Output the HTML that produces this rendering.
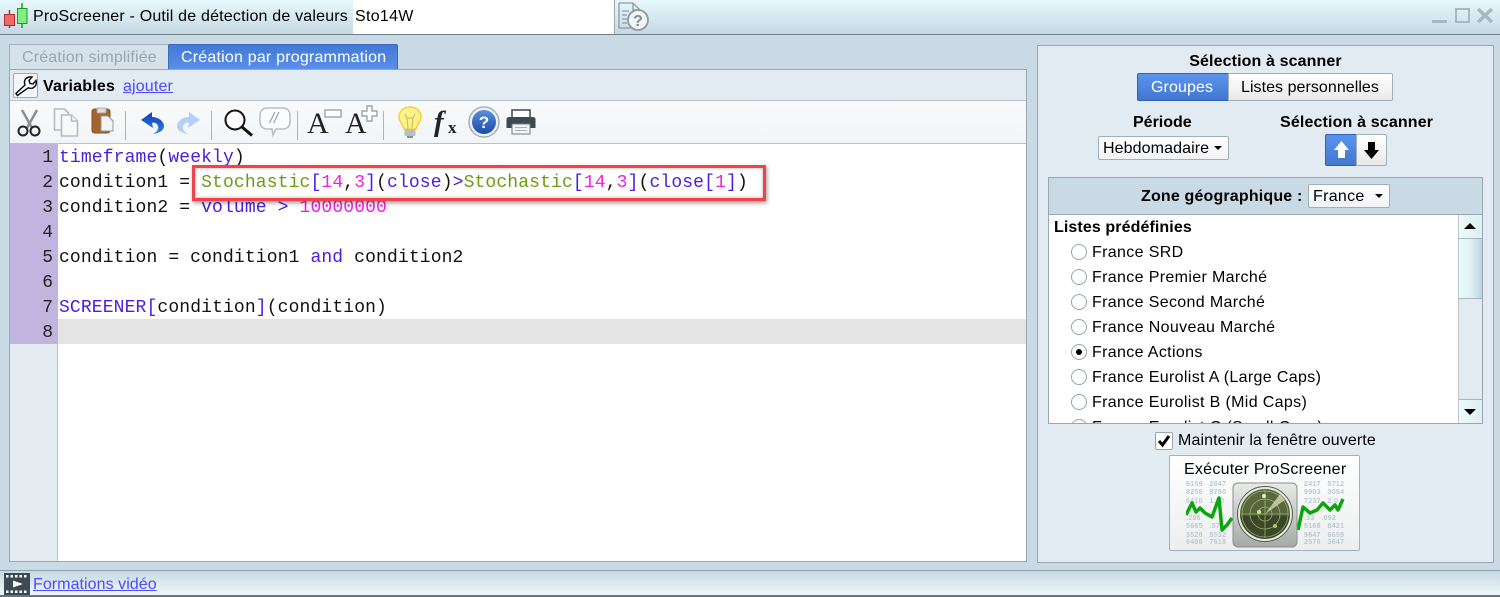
<!DOCTYPE html>
<html lang="fr"><head><meta charset="utf-8"><title>ProScreener</title>
<style>
*{box-sizing:border-box}
html,body{margin:0;padding:0}
body{width:1500px;height:597px;position:relative;overflow:hidden;background:#c9dae4;font-family:"Liberation Sans",Arial,sans-serif;font-size:16px;color:#000}
.a{position:absolute}
.t{position:absolute;white-space:nowrap;line-height:20px}
.b{font-weight:bold}
.code{position:absolute;left:59px;white-space:pre;font-family:"Liberation Mono","Courier New",monospace;font-size:18px;letter-spacing:.13px;line-height:25px;height:25px;color:#111}
.num{position:absolute;left:10px;width:43px;text-align:right;font-family:"Liberation Mono",monospace;font-size:18px;line-height:25px;color:#222}
.k{color:#4a1fe0}.n{color:#f020e0}.g{color:#6f9a10}.p{color:#4a1fe0}
.btn{position:absolute;background:linear-gradient(#fff,#e9e9e9);border:1px solid #9fb0ba;border-radius:2px}
.blue{background:linear-gradient(#5b93ee,#4277cf);border:1px solid #2f62b8;color:#fff}
.sep{position:absolute;top:111px;width:1px;height:29px;background:#a8b6bd}
.r{position:absolute;width:16px;height:16px;border:1px solid #9aa3a8;border-radius:50%;background:#fff}
.rl{position:absolute;white-space:nowrap;line-height:20px;letter-spacing:.35px}
a{color:#4a4aff;text-decoration:underline}
.caret{position:absolute;width:0;height:0;border-left:4px solid transparent;border-right:4px solid transparent;border-top:4px solid #000}
.d{position:absolute;font-size:7px;line-height:8px;color:#bcc9d1;font-weight:bold;letter-spacing:.3px;white-space:nowrap}
</style></head><body>

<!-- title bar -->
<div class="a" style="left:0;top:0;width:1500px;height:35px;background:linear-gradient(#e7f9fe,#c6d8e2);border-bottom:1px solid #6e7f88"></div>
<svg class="a" style="left:3px;top:2px" width="28" height="28">
<path d="M6.500 8v4M6.500 23v3" stroke="#b02b2b" stroke-width="1.500"/><rect x="1.500" y="12.500" width="10" height="11" fill="#f0686c" stroke="#b52c30"/>
<path d="M19 1v6M19 21v5" stroke="#1d9a1d" stroke-width="1.500"/><rect x="14.500" y="6.500" width="9.500" height="15" fill="#7ff07f" stroke="#1d9a1d"/></svg>
<div class="t" style="left:33px;top:7px;letter-spacing:.19px">ProScreener - Outil de détection de valeurs</div>
<div class="a" style="left:353px;top:0;width:262px;height:34px;background:#fff;border-right:1px solid #9aa8b0"></div>
<div class="t" style="left:355px;top:7px;letter-spacing:.3px">Sto14W</div>
<svg class="a" style="left:616px;top:0" width="36" height="33" fill="none" stroke="#8c9aa3" stroke-width="1.300">
<path d="M3 3h14l7 7v4M3 3v25h13M17 3v7h7"/><path d="M6 11h7M6 15h5M6 19h5M6 23h5" stroke-width="1.200"/>
<circle cx="22" cy="20" r="10" fill="#f3f5f6" stroke-width="1.800"/><text x="22" y="26" text-anchor="middle" font-family="Liberation Sans" font-weight="bold" font-size="16" fill="#7f8c94" stroke="none">?</text></svg>
<svg class="a" style="left:1428px;top:5px" width="68" height="22" fill="none" stroke="#a9b8c0" stroke-width="3">
<path d="M4 16.500h15"/><rect x="28" y="4" width="13" height="13" stroke-width="2"/><path d="M50 4l14 13M64 4L50 17" stroke-width="3.500"/></svg>

<!-- tabs -->
<div class="a" style="left:9px;top:44px;width:160px;height:26px;background:#d5e2ea;border:1px solid #9fb0ba;border-bottom:0;border-right:0"></div>
<div class="t" style="left:22px;top:48px;color:#9aa5ac;letter-spacing:.17px">Création simplifiée</div>
<div class="a" style="left:168px;top:44px;width:230px;height:26px;background:linear-gradient(#4279d6,#5a90ec);border:1px solid #3a6cc0;border-bottom:0;border-radius:2px 2px 0 0"></div>
<div class="t" style="left:181px;top:48px;color:#fff;letter-spacing:.2px">Création par programmation</div>

<!-- main panel -->
<div class="a" style="left:9px;top:69px;width:1018px;height:493px;background:#fff;border:1px solid #97a8b2"></div>
<div class="a" style="left:10px;top:70px;width:1016px;height:31px;background:#e3ebf2;border-bottom:1px solid #b6c3cb"></div>
<div class="a" style="left:10px;top:101px;width:1016px;height:43px;background:linear-gradient(#f8fafb,#f2f5f7);border-bottom:1px solid #b6c3cb"></div>
<div class="a" style="left:13px;top:73px;width:25px;height:25px;background:#f4f6f7;border:1px solid #9fa9af;border-radius:2px"></div>
<svg class="a" style="left:14px;top:74px" width="23" height="23" fill="#fff" stroke="#111" stroke-width="1.500"><path d="M3.500 21.500 2 19.500l9-8.500c-1-3-.5-5 1-6.500 1.500-1.300 3.500-2 6-1.500l-3 3.500 1 3 3 .5 3-3.500c.7 2.700 0 5-1.500 6.300-1.500 1.400-4 2-6.300 1z"/></svg>
<div class="t b" style="left:43px;top:77px;letter-spacing:.2px">Variables</div>
<a class="t" style="left:123px;top:77px;letter-spacing:.15px">ajouter</a>

<!-- toolbar icons -->
<svg class="a" style="left:16px;top:108px" width="26" height="30" fill="none">
<path d="M6 2l10 18M21 2L11 20" stroke="#8e8e8e" stroke-width="2.500"/>
<circle cx="7" cy="23" r="4.500" stroke="#222" stroke-width="2"/><circle cx="19" cy="23" r="4.500" stroke="#222" stroke-width="2"/></svg>
<svg class="a" style="left:52px;top:107px" width="28" height="30" fill="#f7f9f9" stroke="#b0bcc2" stroke-width="1.600">
<path d="M2.500 2h10l4 4v17h-14z"/><path d="M9.500 8h10l6 6v15h-16z"/><path d="M19.500 8v6h6"/></svg>
<svg class="a" style="left:91px;top:107px" width="24" height="28">
<rect x="1" y="2" width="18" height="24" rx="2.500" fill="#a5652a" stroke="#8a5020"/>
<rect x="6" y="1" width="9" height="5" rx="1" fill="#ddd" stroke="#aaa"/>
<path d="M10 9h7l5 5v10H10z" fill="#f4f4f4" stroke="#8f9aa0"/></svg>
<div class="sep" style="left:125px"></div>
<svg class="a" style="left:139px;top:110px" width="27" height="25">
<defs><linearGradient id="un" x1="0" y1="0" x2="0" y2="1"><stop offset="0" stop-color="#0f3fb0"/><stop offset="1" stop-color="#2f80ea"/></linearGradient></defs>
<path d="M2 10L13 2v5C20 7 25 12 25 16C25 20 21 23 14 24C18 22 20 19 19 16C18 13 15 12 13 13L14 18z" fill="url(#un)"/></svg>
<svg class="a" style="left:176px;top:110px" width="27" height="25">
<path d="M24 10L13 2v5C6 7 1 12 1 16C1 20 5 23 12 24C8 22 6 19 7 16C8 13 11 12 13 13L12 18z" fill="#b6cffa"/></svg>
<div class="sep" style="left:211px"></div>
<svg class="a" style="left:222px;top:107px" width="32" height="30" fill="none">
<circle cx="13" cy="13" r="9.500" stroke="#111" stroke-width="2" fill="#fff"/><path d="M20 20l10 8.500" stroke="#111" stroke-width="3"/></svg>
<svg class="a" style="left:258px;top:106px" width="34" height="34" fill="#fbfcfc" stroke="#b5bdc1" stroke-width="1.500">
<path d="M9 2h16c4 0 7 3 7 7v7c0 4-3 7-7 7h-7l-3 6-1-6h-5c-4 0-7-3-7-7V9c0-4 3-7 7-7z"/>
<text x="16" y="17" text-anchor="middle" font-family="Liberation Sans" font-style="italic" font-size="15" fill="#8f9a9f" stroke="none">//</text></svg>
<div class="sep" style="left:297px"></div>
<div class="t" style="left:307px;top:108px;font-family:'Liberation Serif',serif;font-size:30px;line-height:32px;color:#222">A</div>
<svg class="a" style="left:324px;top:109px" width="18" height="10"><rect x="1" y="1" width="16" height="7" fill="#fff" stroke="#9aa6ac" stroke-width="1.400"/></svg>
<div class="t" style="left:345px;top:108px;font-family:'Liberation Serif',serif;font-size:30px;line-height:32px;color:#222">A</div>
<svg class="a" style="left:361px;top:105px" width="18" height="18"><path d="M6 1h5v5h5v5h-5v5H6v-5H1V6h5z" fill="#fff" stroke="#9aa6ac" stroke-width="1.400"/></svg>
<div class="sep" style="left:383px"></div>
<svg class="a" style="left:397px;top:106px" width="26" height="33">
<path d="M13 1c6.500 0 11 4.500 11 10 0 5-4 7-5 12H7c-1-5-5-7-5-12C2 5.500 6.500 1 13 1z" fill="#fdf28a" stroke="#eed23c" stroke-width="1.500"/>
<path d="M8 8l2 4h6l2-4M10 12l1 10M16 12l-1 10" fill="none" stroke="#d8c257" stroke-width="1.300"/>
<rect x="7.500" y="23" width="11" height="7" rx="1" fill="#b9bec0"/><rect x="10" y="30" width="6" height="2" fill="#8c9194"/></svg>
<div class="t" style="left:434px;top:106px;font-family:'Liberation Serif',serif;font-style:italic;font-weight:bold;font-size:29px;line-height:32px;color:#222">f</div>
<div class="t b" style="left:448px;top:120px;font-family:'Liberation Serif',serif;font-size:17px;line-height:16px;color:#222">x</div>
<svg class="a" style="left:468px;top:106px" width="32" height="32">
<defs><linearGradient id="hb" x1="0" y1="0" x2="0" y2="1"><stop offset="0" stop-color="#5b8fdc"/><stop offset="1" stop-color="#1c4aa8"/></linearGradient></defs>
<circle cx="16" cy="16" r="15" fill="#eef2f5" stroke="#a6b2ba" stroke-width="1.500"/><circle cx="16" cy="16" r="12" fill="url(#hb)"/>
<text x="16" y="22" text-anchor="middle" font-family="Liberation Sans" font-weight="bold" font-size="17" fill="#fff">?</text></svg>
<svg class="a" style="left:506px;top:109px" width="30" height="26">
<path d="M6 1h18v8H6z" fill="#fff" stroke="#3c4a52" stroke-width="1.500"/>
<path d="M3 8h24c1.500 0 2.500 1 2.500 2.500V19H0.500v-8.500C.5 9 1.500 8 3 8z" fill="#3c4a52"/>
<rect x="6" y="15" width="18" height="10" fill="#f3f5f5" stroke="#707c83"/><path d="M9 18.500h12M9 21.500h12" stroke="#a9b1b6"/></svg>

<!-- gutter -->
<div class="a" style="left:10px;top:144px;width:48px;height:200px;background:#c1b5e0"></div>
<div class="a" style="left:10px;top:344px;width:48px;height:217px;background:#e3ebf1;border-right:1px solid #b9c6cd"></div>
<div class="a" style="left:58px;top:319px;width:968px;height:25px;background:#e4e4e4"></div>
<div class="num" style="top:146px">1</div><div class="num" style="top:171px">2</div><div class="num" style="top:196px">3</div><div class="num" style="top:221px">4</div><div class="num" style="top:246px">5</div><div class="num" style="top:271px">6</div><div class="num" style="top:296px">7</div><div class="num" style="top:321px">8</div>

<!-- code -->
<div class="code" style="top:146px"><span class="k">timeframe</span>(<span class="k">weekly</span>)</div>
<div class="code" style="top:171px">condition1 = <span class="g">Stochastic</span><span class="p">[</span><span class="n">14</span>,<span class="n">3</span><span class="p">]</span>(<span class="k">close</span>)<span class="k">&gt;</span><span class="g">Stochastic</span><span class="p">[</span><span class="n">14</span>,<span class="n">3</span><span class="p">]</span>(<span class="k">close</span><span class="p">[</span><span class="n">1</span><span class="p">]</span>)</div>
<div class="code" style="top:196px">condition2 = <span class="k">volume</span> <span class="k">&gt;</span> <span class="n">10000000</span></div>
<div class="code" style="top:246px">condition = condition1 <span class="k">and</span> condition2</div>
<div class="code" style="top:296px"><span class="k">SCREENER</span><span class="p">[</span>condition<span class="p">]</span>(condition)</div>
<div class="a" style="left:192px;top:165px;width:574px;height:36px;border:3px solid #f0424a;box-shadow:1px 2px 4px rgba(0,0,0,.4),inset 0 0 3px rgba(0,0,0,.35)"></div>

<!-- right panel -->
<div class="a" style="left:1037px;top:45px;width:457px;height:518px;background:#e3ebf2;border:1px solid #97a8b2"></div>
<div class="t b" style="left:1037px;width:457px;text-align:center;top:52px;letter-spacing:.12px">Sélection à scanner</div>
<div class="btn blue" style="left:1137px;top:73px;width:92px;height:28px;border-radius:2px 0 0 2px"></div>
<div class="t" style="left:1151px;top:78px;color:#fff;letter-spacing:.1px">Groupes</div>
<div class="btn" style="left:1228px;top:73px;width:165px;height:28px;border-radius:0 2px 2px 0"></div>
<div class="t" style="left:1241px;top:78px;letter-spacing:.05px">Listes personnelles</div>
<div class="t b" style="left:1133px;top:113px">Période</div>
<div class="t b" style="left:1280px;top:113px;letter-spacing:.15px">Sélection à scanner</div>
<div class="btn" style="left:1098px;top:136px;width:131px;height:24px;background:linear-gradient(#fff,#f1f3f4)"></div>
<div class="t" style="left:1103px;top:139px;letter-spacing:.1px">Hebdomadaire</div>
<div class="caret" style="left:1214px;top:146px"></div>
<div class="btn blue" style="left:1325px;top:134px;width:32px;height:32px;border-radius:2px 0 0 2px"></div>
<svg class="a" style="left:1333px;top:140px" width="17" height="20"><path d="M8.500 1L16 10h-4v8H5v-8H1z" fill="#fff"/></svg>
<div class="btn" style="left:1356px;top:134px;width:31px;height:32px;border-radius:0 2px 2px 0"></div>
<svg class="a" style="left:1363px;top:140px" width="17" height="20"><path d="M8.500 19L16 10h-4V2H5v8H1z" fill="#000"/></svg>

<div class="a" style="left:1048px;top:177px;width:435px;height:247px;background:#c9dae4;border:1px solid #97a8b2"></div>
<div class="t b" style="left:1141px;top:187px;letter-spacing:.17px">Zone géographique :</div>
<div class="btn" style="left:1308px;top:184px;width:82px;height:24px;background:linear-gradient(#fff,#f1f3f4)"></div>
<div class="t" style="left:1313px;top:187px;letter-spacing:.3px">France</div>
<div class="caret" style="left:1375px;top:194px"></div>

<div class="a" style="left:1049px;top:214px;width:433px;height:209px;background:#fff;border-top:1px solid #97a8b2;overflow:hidden">
<div class="t b" style="left:5px;top:3px;letter-spacing:.1px">Listes prédéfinies</div>
<div class="r" style="left:22px;top:29px"></div><div class="rl" style="left:43px;top:28px">France SRD</div>
<div class="r" style="left:22px;top:54px"></div><div class="rl" style="left:43px;top:53px">France Premier Marché</div>
<div class="r" style="left:22px;top:79px"></div><div class="rl" style="left:43px;top:78px">France Second Marché</div>
<div class="r" style="left:22px;top:104px"></div><div class="rl" style="left:43px;top:103px">France Nouveau Marché</div>
<div class="r" style="left:22px;top:129px"></div><div class="a" style="left:27px;top:134px;width:6px;height:6px;border-radius:50%;background:#000"></div><div class="rl" style="left:43px;top:128px">France Actions</div>
<div class="r" style="left:22px;top:154px"></div><div class="rl" style="left:43px;top:153px">France Eurolist A (Large Caps)</div>
<div class="r" style="left:22px;top:179px"></div><div class="rl" style="left:43px;top:178px">France Eurolist B (Mid Caps)</div>
<div class="r" style="left:22px;top:204px"></div><div class="rl" style="left:43px;top:203px">France Eurolist C (Small Caps)</div>
</div>
<!-- scrollbar -->
<div class="a" style="left:1458px;top:215px;width:24px;height:208px;background:#e3ebf2;border-left:1px solid #b9c6cd"></div>
<div class="a" style="left:1458px;top:215px;width:24px;height:24px;background:linear-gradient(90deg,#eefafb,#dfeef1);border-left:1px solid #b9c6cd;border-bottom:1px solid #a9b8c0"></div>
<div class="a" style="left:1458px;top:239px;width:24px;height:60px;background:linear-gradient(90deg,#eafafa,#e0f2f4 50%,#bdd2db);border-left:1px solid #b9c6cd;border-bottom:1px solid #a9b8c0"></div>
<div class="a" style="left:1458px;top:399px;width:24px;height:24px;background:linear-gradient(90deg,#eefafb,#dfeef1);border-left:1px solid #b9c6cd;border-top:1px solid #a9b8c0"></div>
<div class="a" style="left:1464px;top:223px;border-left:6px solid transparent;border-right:6px solid transparent;border-bottom:6px solid #000"></div>
<div class="a" style="left:1464px;top:409px;border-left:6px solid transparent;border-right:6px solid transparent;border-top:6px solid #000"></div>

<!-- keep open -->
<div class="a" style="left:1155px;top:432px;width:18px;height:18px;background:#fff;border:1px solid #9aa5ab;border-radius:2px"></div>
<svg class="a" style="left:1156px;top:433px" width="16" height="16"><path d="M3 8l3.500 4L13 3" fill="none" stroke="#000" stroke-width="3"/></svg>
<div class="t" style="left:1178px;top:431px;letter-spacing:.11px">Maintenir la fenêtre ouverte</div>

<!-- run button -->
<div class="a" style="left:1169px;top:455px;width:191px;height:96px;background:linear-gradient(#fff,#ecefef);border:1px solid #a5b2b9;border-radius:2px"></div>
<div class="t" style="left:1184px;top:460px;letter-spacing:.25px">Exécuter ProScreener</div>
<div class="d" style="left:1186px;top:481px">6159&nbsp;&nbsp;&nbsp;2647</div><div class="d" style="left:1186px;top:489px">8258&nbsp;&nbsp;&nbsp;8750</div><div class="d" style="left:1186px;top:498px">6410&nbsp;&nbsp;&nbsp;1.10</div><div class="d" style="left:1186px;top:515px">.286</div><div class="d" style="left:1186px;top:523px">5665&nbsp;&nbsp;&nbsp;.57</div><div class="d" style="left:1186px;top:532px">3528&nbsp;&nbsp;&nbsp;5532</div><div class="d" style="left:1186px;top:539px">9498&nbsp;&nbsp;&nbsp;7618</div>
<div class="d" style="left:1304px;top:481px">2417&nbsp;&nbsp;&nbsp;5712</div><div class="d" style="left:1304px;top:489px">9903&nbsp;&nbsp;&nbsp;3054</div><div class="d" style="left:1304px;top:498px">7237&nbsp;&nbsp;&nbsp;2.0</div><div class="d" style="left:1304px;top:515px">.33&nbsp;&nbsp;&nbsp;.092</div><div class="d" style="left:1304px;top:523px">5168&nbsp;&nbsp;&nbsp;8421</div><div class="d" style="left:1304px;top:532px">9647&nbsp;&nbsp;&nbsp;6659</div><div class="d" style="left:1304px;top:539px">2576&nbsp;&nbsp;&nbsp;3647</div>
<svg class="a" style="left:1186px;top:481px" width="160" height="62" fill="none">
<path d="M0 34L6 22 10 31 14 27 19 32 26 36 33 17 36 49 41 44 46 37" stroke="#0ca50c" stroke-width="3.500" stroke-linejoin="round"/>
<path d="M112 49L117 26 124 32 131 29 137 22 144 29 149 24 152 29 157 18" stroke="#0ca50c" stroke-width="3.500" stroke-linejoin="round"/></svg>
<svg class="a" style="left:1232px;top:482px" width="66" height="66">
<defs><linearGradient id="pl" x1="0" y1="0" x2="0" y2="1"><stop offset="0" stop-color="#e8ebe8"/><stop offset="1" stop-color="#a5aaa6"/></linearGradient>
<linearGradient id="sc" x1="0" y1="0" x2="0" y2="1"><stop offset="0" stop-color="#5d6a40"/><stop offset=".5" stop-color="#58643c"/><stop offset=".55" stop-color="#3a4429"/><stop offset="1" stop-color="#3e4a2a"/></linearGradient></defs>
<rect x="1" y="1" width="64" height="64" rx="5" fill="url(#pl)" stroke="#888e8a"/>
<circle cx="33" cy="32" r="27.500" fill="#e6ebe4" stroke="#555a54"/><circle cx="33" cy="32" r="25" fill="url(#sc)"/>
<g fill="none" stroke="#9cc56e" stroke-width=".8" opacity=".85"><circle cx="33" cy="32" r="23"/><circle cx="33" cy="32" r="15"/><circle cx="33" cy="32" r="7"/><path d="M33 8v48M9 32h48"/></g>
<path d="M33 32L48 12l5 6z" fill="#dfe8c4" opacity=".7"/><circle cx="32" cy="14" r="2" fill="#e6f4b8"/><circle cx="27" cy="30" r="2" fill="#cfe88a"/><circle cx="43" cy="44" r="2" fill="#a8cc58"/></svg>

<!-- footer -->
<div class="a" style="left:0;top:570px;width:1500px;height:27px;background:linear-gradient(#c6d9e3,#f0f7f9);border-top:1px solid #8f9fa8;border-bottom:2px solid #66767e"></div>
<svg class="a" style="left:4px;top:573px" width="26" height="22"><rect width="26" height="22" fill="#3c4a55"/><path d="M2 2h2.500v2.500H2zM6.500 2H9v2.500H6.500zM11 2h2.500v2.500H11zM15.500 2H18v2.500h-2.500zM20 2h2.500v2.500H20zM2 17.500h2.500V20H2zM6.500 17.500H9V20H6.500zM11 17.500h2.500V20H11zM15.500 17.500H18V20h-2.500zM20 17.500h2.500V20H20z" fill="#fff"/><path d="M9 7.500l10 3.500-10 3.500z" fill="#fff"/></svg>
<a class="t" style="left:33px;top:575px;letter-spacing:.06px">Formations vidéo</a>
</body></html>
